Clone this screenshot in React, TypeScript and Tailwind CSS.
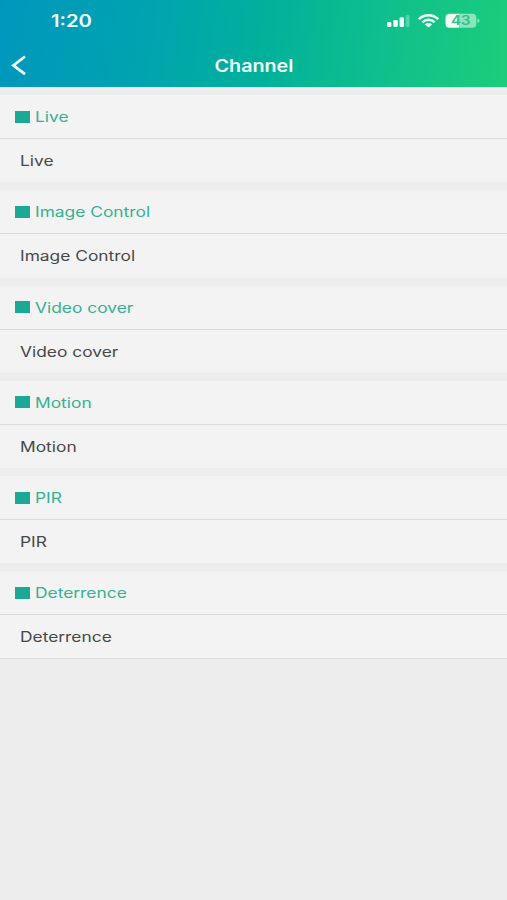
const sections = ['Live', 'Image Control', 'Video cover', 'Motion', 'PIR', 'Deterrence'];

function StatusIcons() {
  return (
    <svg className="h-[20px] w-[96px]" viewBox="0 0 96 20" fill="none">
      <g fill="#effff8">
        <rect x="1" y="12" width="4.4" height="5" rx="1.3" />
        <rect x="7.4" y="10" width="4.4" height="7" rx="1.3" />
        <rect x="13.6" y="7.2" width="4.4" height="9.8" rx="1.3" />
        <rect x="19.6" y="5" width="4" height="12" rx="1.3" opacity="0.3" />
      </g>
      <g stroke="#effff8" strokeWidth="2.5">
        <path d="M32.8 9.1C38 3.8 47 3.8 52.2 9.1" />
        <path d="M36.3 12.4C39.8 9 45.2 9 48.7 12.4" />
      </g>
      <path d="M38.9 14.4C40.9 12.5 44.1 12.5 46.1 14.4L42.5 17.4Z" fill="#effff8" />
      <path d="M63.5 3.7H73.2V17.7H63.5A4 4 0 0 1 59.5 13.7V7.7A4 4 0 0 1 63.5 3.7Z" fill="#effff8" />
      <path d="M73.2 3.7H86.3A4 4 0 0 1 90.3 7.7V13.7A4 4 0 0 1 86.3 17.7H73.2Z" fill="#8be5bd" />
      <path d="M91.4 8.5Q93.5 9 93.5 10.7Q93.5 12.4 91.4 12.9Z" fill="#8be5bd" />
      <text x="65" y="15.2" textLength="19.5" lengthAdjust="spacingAndGlyphs" fill="#35bd88" fontSize="12.5" fontWeight="600" fontFamily="Inter, sans-serif">43</text>
    </svg>
  );
}

export default function App() {
  return (
    <div className="flex h-[900px] w-[507px] flex-col overflow-hidden bg-[#ededed] font-['Inter',sans-serif]">
      <header className="h-[87px] shrink-0 bg-[linear-gradient(98deg,#0097bd_0%,#00a3b0_28%,#00b19b_52%,#10c08b_77%,#1bcd7b_100%)] text-[#f2fffc]">
        <div className="flex h-[43px] items-start justify-between pr-[25px] pl-[51px]">
          <span className="mt-[10px] origin-left scale-x-[1.19] text-[17px] leading-[22px] font-semibold">1:20</span>
          <div className="mt-[10px]"><StatusIcons /></div>
        </div>
        <div className="grid h-[44px] grid-cols-[60px_1fr_60px] items-center">
          <svg className="ml-[10px] h-[24px] w-[20px]" viewBox="0 0 20 24" fill="none" stroke="currentColor" strokeWidth="2.8">
            <path d="M15 3.5L3.4 12.4L15 21.2" />
          </svg>
          <h1 className="pt-[2px] text-center text-[17px] leading-[22px] font-semibold">
            <span className="inline-block scale-x-[1.16]">Channel</span>
          </h1>
        </div>
      </header>
      <main>
        {sections.map((name) => (
          <section key={name} className="h-[95.25px] pt-[8px]">
            <div className="flex h-[44px] items-center border-b border-[#d9dcdb] bg-[#f3f3f3] pl-[15px] text-[#36b193]">
              <span className="mr-[5px] h-[12px] w-[15px] bg-[#1ba894]" />
              <span className="origin-left scale-x-[1.24] pt-px text-[14px] leading-5">{name}</span>
            </div>
            <div className="flex h-[43.25px] items-center bg-[#f3f3f3] pl-[20px] text-[#484848]">
              <span className="origin-left scale-x-[1.24] pt-px text-[14px] leading-5">{name}</span>
            </div>
          </section>
        ))}
        <div className="-mt-px h-px bg-[#dedede]" />
      </main>
    </div>
  );
}
